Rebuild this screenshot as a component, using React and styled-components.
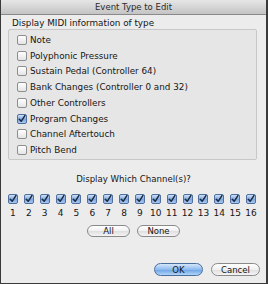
import React from "react";
import styled, { createGlobalStyle, css } from "styled-components";

const GlobalStyle = createGlobalStyle`
  html, body {
    margin: 0;
    padding: 0;
    background: #ececec;
  }
  body {
    font-family: "DejaVu Sans", "Liberation Sans", sans-serif;
    font-size: 8.5px;
    color: #151515;
  }
`;

const types = [
  { label: "Note", checked: false },
  { label: "Polyphonic Pressure", checked: false },
  { label: "Sustain Pedal (Controller 64)", checked: false },
  { label: "Bank Changes (Controller 0 and 32)", checked: false },
  { label: "Other Controllers", checked: false },
  { label: "Program Changes", checked: true },
  { label: "Channel Aftertouch", checked: false },
  { label: "Pitch Bend", checked: false },
];

const channels = Array.from({ length: 16 }, (_, i) => i + 1);

function Check({ checked }) {
  return (
    <Box $checked={checked}>
      {checked && (
        <svg width="8" height="8" viewBox="0 0 8 8">
          <path
            d="M1.3 4.2 L3.2 6.3 L6.9 0.6"
            fill="none"
            stroke="#1b2a44"
            strokeWidth="1.5"
            strokeLinecap="round"
            strokeLinejoin="round"
          />
        </svg>
      )}
    </Box>
  );
}

export default function App() {
  return (
    <>
      <GlobalStyle />
      <Window>
        <TitleBar>Event Type to Edit</TitleBar>
        <Body>
          <GroupLabel>Display MIDI information of type</GroupLabel>
          <GroupBox>
            {types.map((t) => (
              <Row key={t.label}>
                <Check checked={t.checked} />
                <span>{t.label}</span>
              </Row>
            ))}
          </GroupBox>
          <Heading>Display Which Channel(s)?</Heading>
          <ChannelGrid>
            {channels.map((c) => (
              <Cell key={"c" + c}>
                <Check checked />
              </Cell>
            ))}
            {channels.map((c) => (
              <Num key={"n" + c}>{c}</Num>
            ))}
          </ChannelGrid>
          <ButtonRow>
            <Pill>All</Pill>
            <Pill>None</Pill>
          </ButtonRow>
          <Footer>
            <Pill $primary $wide>OK</Pill>
            <Pill $wide>Cancel</Pill>
          </Footer>
        </Body>
      </Window>
    </>
  );
}

const Window = styled.div`
  width: 268px;
  height: 284px;
  box-sizing: border-box;
  border-left: 1px solid #3a3a3a;
  border-right: 2px solid #3a3a3a;
  border-bottom: 1px solid #3a3a3a;
  background: #ececec;
  display: flex;
  flex-direction: column;
  overflow: hidden;
`;

const TitleBar = styled.div`
  height: 14px;
  line-height: 14px;
  text-align: center;
  font-size: 8.5px;
  color: #2b2b2b;
  background: linear-gradient(#e6e6e6, #c4c4c4);
  border-bottom: 1px solid #8a8a8a;
`;

const Body = styled.div`
  display: flex;
  flex-direction: column;
  flex: 1;
`;

const GroupLabel = styled.div`
  margin: 3px 0 0 11px;
  height: 10px;
  line-height: 10px;
  font-size: 8.8px;
`;

const GroupBox = styled.div`
  margin: 1px 9px 0 7px;
  padding: 2px 0 1px 8px;
  border: 1px solid #c8c8c8;
  border-radius: 2px;
  background: #e6e6e6;
  display: flex;
  flex-direction: column;
`;

const Row = styled.div`
  height: 15.75px;
  display: flex;
  align-items: center;
  gap: 3px;
  font-size: 8.8px;
`;

const Box = styled.span`
  width: 10px;
  height: 10px;
  box-sizing: border-box;
  border-radius: 2px;
  display: inline-flex;
  align-items: center;
  justify-content: center;
  flex-shrink: 0;
  ${({ $checked }) =>
    $checked
      ? css`
          border: 1px solid #4f6f9e;
          background: linear-gradient(#cfe1f7, #7ea9de 55%, #a9c8ef);
        `
      : css`
          border: 1px solid #8e8e8e;
          background: linear-gradient(#ffffff, #e4e4e4);
        `}
`;

const Heading = styled.div`
  margin-top: 13px;
  text-align: center;
  height: 12px;
  line-height: 12px;
  font-size: 8.6px;
`;

const ChannelGrid = styled.div`
  margin: 9px 0 0 4px;
  width: 254px;
  display: grid;
  grid-template-columns: repeat(16, 1fr);
  row-gap: 4px;
`;

const Cell = styled.div`
  display: flex;
  justify-content: center;
`;

const Num = styled.div`
  text-align: center;
  height: 10px;
  line-height: 10px;
  font-size: 9px;
`;

const ButtonRow = styled.div`
  margin-top: 7px;
  display: flex;
  justify-content: center;
  gap: 7px;
`;

const Footer = styled.div`
  margin: 26px 6px 0 0;
  display: flex;
  justify-content: flex-end;
  gap: 8px;
`;

const Pill = styled.div`
  width: ${({ $wide }) => ($wide ? "49px" : "43px")};
  height: ${({ $wide }) => ($wide ? "13px" : "12px")};
  box-sizing: border-box;
  border-radius: 7px;
  display: flex;
  align-items: center;
  justify-content: center;
  font-size: 8.5px;
  ${({ $primary }) =>
    $primary
      ? css`
          border: 1px solid #4a6f9f;
          background: linear-gradient(#d4e6fa, #8dbbef 50%, #6ea6e6 55%, #b2d4f7);
        `
      : css`
          border: 1px solid #8a8a8a;
          background: linear-gradient(#ffffff, #f0f0f0 50%, #e0e0e0 55%, #f4f4f4);
        `}
`;
